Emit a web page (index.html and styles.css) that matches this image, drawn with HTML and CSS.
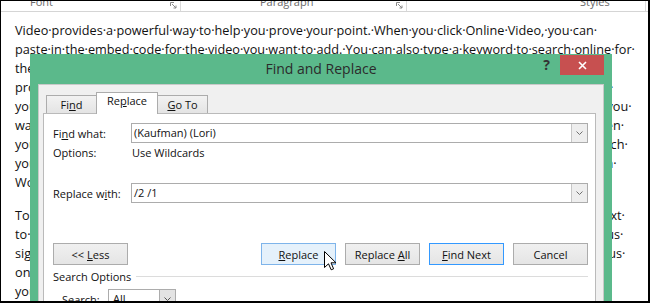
FILE: index.html
```html
<!DOCTYPE html>
<html lang="en">
<head>
  <meta charset="UTF-8">
  <title>Find and Replace</title>
  <link rel="stylesheet" href="styles.css">
</head>
<body>

  <div class="screen">
    <div class="ribbon">
      <div class="group group-font">
        <span class="group-label">Font</span>
        <svg class="launcher" width="7" height="7" viewBox="0 0 7 7"><path d="M0.5 4V0.5H4M2 2L6 6M6 3.5V6H3.5" fill="none" stroke="#8a8a8a" stroke-width="1"/></svg>
      </div>
      <div class="group group-para">
        <span class="group-label">Paragraph</span>
        <svg class="launcher" width="7" height="7" viewBox="0 0 7 7"><path d="M0.5 4V0.5H4M2 2L6 6M6 3.5V6H3.5" fill="none" stroke="#8a8a8a" stroke-width="1"/></svg>
      </div>
      <div class="group group-styles">
        <span class="group-label">Styles</span>
      </div>
    </div>

    <div class="doc">
      <p class="para">
        <span class="line">Video·provides·a·powerful·way·to·help·you·prove·your·point.·When·you·click·Online·Video,·you·can·</span>
        <span class="line">paste·in·the·embed·code·for·the·video·you·want·to·add.·You·can·also·type·a·keyword·to·search·online·for·</span>
        <span class="line">the·video·that·best·fits·your·document.·To·make·your·document·look·professionally·produced,·Word·</span>
        <span class="line">provides·header,·footer,·cover·page,·and·text·box·designs·that·complement·each·other.·For·example,·</span>
        <span class="line">you·can·add·a·matching·cover·page,·header,·and·sidebar.·Click·Insert·and·then·choose·the·elements·you·</span>
        <span class="line">want·from·the·different·galleries.·Themes·and·styles·also·help·keep·your·document·coordinated.·When·</span>
        <span class="line">you·click·Design·and·choose·a·new·Theme,·the·pictures,·charts,·and·SmartArt·graphics·change·to·match·</span>
        <span class="line">your·new·theme.·When·you·apply·styles,·your·headings·change·to·match·the·new·theme.·Save·time·in·</span>
        <span class="line">Word·with·new·buttons·that·show·up·where·you·need·them.¶</span>
      </p>
      <p class="para">
        <span class="line">To·change·the·way·a·picture·fits·in·your·document,·click·it·and·a·button·for·layout·options·appears·next·</span>
        <span class="line">to·it.·When·you·work·on·a·table,·click·where·you·want·to·add·a·row·or·a·column,·and·then·click·the·plus·</span>
        <span class="line">sign.·Reading·is·easier,·too,·in·the·new·Reading·view.·You·can·collapse·parts·of·the·document·and·focus·</span>
        <span class="line">on·the·text·you·want.·If·you·need·to·stop·reading·before·you·reach·the·end,·Word·remembers·where·</span>
        <span class="line">you·left·off·-·even·on·another·device.¶</span>
      </p>
    </div>

    <div class="dialog">
      <div class="titlebar">
        <span class="title">Find and Replace</span>
        <div class="controls">
          <span class="help">?</span>
          <span class="close">
            <svg width="9" height="9" viewBox="0 0 9 9"><path d="M1 1L8 8M8 1L1 8" stroke="#fff" stroke-width="1.6"/></svg>
          </span>
        </div>
      </div>

      <div class="client">
        <div class="tabs">
          <span class="tab">Fi<u>n</u>d</span>
          <span class="tab active">Re<u>p</u>lace</span>
          <span class="tab"><u>G</u>o To</span>
        </div>

        <div class="panel">
          <div class="field-row first">
            <span class="label">Fi<u>n</u>d what:</span>
            <div class="combo">
              <span class="combo-text">(Kaufman) (Lori)</span>
              <span class="combo-arrow"><svg width="7" height="4" viewBox="0 0 7 4"><path d="M0.5 0.5L3.5 3.5L6.5 0.5" fill="none" stroke="#707070"/></svg></span>
            </div>
          </div>

          <div class="field-row options">
            <span class="label">Options:</span>
            <span class="value">Use Wildcards</span>
          </div>

          <div class="field-row replace">
            <span class="label">Replace w<u>i</u>th:</span>
            <div class="combo">
              <span class="combo-text">/2 /1</span>
              <span class="combo-arrow"><svg width="7" height="4" viewBox="0 0 7 4"><path d="M0.5 0.5L3.5 3.5L6.5 0.5" fill="none" stroke="#707070"/></svg></span>
            </div>
          </div>

          <div class="button-row">
            <button class="btn">&lt;&lt; <u>L</u>ess</button>
            <div class="button-group">
              <button class="btn hover"><u>R</u>eplace</button>
              <button class="btn">Replace <u>A</u>ll</button>
              <button class="btn default"><u>F</u>ind Next</button>
              <button class="btn">Cancel</button>
            </div>
          </div>

          <div class="section-title">
            <span>Search Options</span>
            <span class="section-rule"></span>
          </div>

          <div class="search-row">
            <span class="search-label">Se<u>a</u>rch:</span>
            <div class="select">
              <span class="combo-text">All</span>
              <span class="select-arrow"><svg width="7" height="4" viewBox="0 0 7 4"><path d="M0.5 0.5L3.5 3.5L6.5 0.5" fill="none" stroke="#555"/></svg></span>
            </div>
          </div>
        </div>
      </div>
    </div>

    <svg class="cursor" width="13" height="20" viewBox="0 0 13 20">
      <path d="M0.5 0.5V16.5L4.5 12.8L7.2 18.8L9.6 17.8L7 11.8H12Z" fill="#fff" stroke="#000" stroke-width="1" stroke-linejoin="round"/>
    </svg>
  </div>

</body>
</html>
```

FILE: styles.css
```css
* {
  box-sizing: border-box;
}

body {
  margin: 0;
  background: #fff;
}

.screen {
  position: relative;
  width: 650px;
  height: 303px;
  overflow: hidden;
  background: #fff;
  border: solid #000;
  border-width: 1px 2px 2px 1px;
  font-family: "Open Sans", "Liberation Sans", sans-serif;
}

/* ribbon strip, cut off at the top */
.ribbon {
  display: flex;
  height: 11px;
  overflow: hidden;
  border-bottom: 1px solid #d5d5d5;
  font-size: 11px;
  color: #6a6a6a;
}

.group {
  display: flex;
  align-items: flex-start;
  border-right: 1px solid #dadada;
}

.group-font {
  width: 180px;
  padding-left: 29px;
}

.group-para {
  width: 226px;
  padding-left: 79px;
}

.group-styles {
  width: 239px;
  padding-left: 173px;
}

.group-label {
  line-height: 11px;
  margin-top: -5px;
}

.launcher {
  margin-left: auto;
  margin-right: 3px;
  margin-top: 1px;
}

/* document text */
.doc {
  padding: 9px 0 0 14px;
  font-size: 12.7px;
  line-height: 19px;
  color: #111;
}

.para {
  margin: 0 0 14px;
}

.line {
  display: block;
  white-space: nowrap;
}

/* dialog */
.dialog {
  position: absolute;
  left: 29px;
  top: 53px;
  width: 582px;
  height: 260px;
  padding: 0 8px;
  background: #5bb98b;
  display: flex;
  flex-direction: column;
}

.titlebar {
  display: grid;
  grid-template-columns: 1fr auto 1fr;
  height: 30px;
  flex: none;
}

.title {
  grid-column: 2;
  font-size: 14px;
  line-height: 30px;
  color: #2b2b2b;
}

.controls {
  justify-self: end;
  display: flex;
  align-items: flex-start;
  gap: 10px;
  margin-top: 1px;
}

.help {
  font-size: 14px;
  font-weight: 700;
  line-height: 20px;
  color: #333;
}

.close {
  width: 44px;
  height: 20px;
  background: #c75050;
  display: flex;
  align-items: center;
  justify-content: center;
}

.client {
  flex: 1;
  display: flex;
  flex-direction: column;
  padding: 7px 7px 0 4px;
  background: #f0f0f0;
  border: 1px solid #c9c9c9;
  border-bottom: none;
  font-size: 11px;
  color: #111;
}

.tabs {
  display: flex;
  align-items: flex-end;
  height: 21px;
  padding-left: 3px;
  flex: none;
}

.tab {
  width: 51px;
  height: 18px;
  margin-right: -1px;
  padding-top: 1px;
  border: 1px solid #acacac;
  border-bottom: none;
  background: linear-gradient(#f2f2f2, #e4e4e4);
  line-height: 16px;
  text-align: center;
}

.tab.active {
  position: relative;
  z-index: 1;
  width: 62px;
  height: 22px;
  margin-bottom: -1px;
  padding-top: 0;
  background: #fff;
}

.panel {
  flex: 1;
  padding: 0 7px 0 9px;
  background: #fff;
  border: 1px solid #bababa;
}

.field-row {
  display: grid;
  grid-template-columns: 78px 1fr;
  align-items: center;
}

.field-row.first {
  margin-top: 9px;
}

.field-row.options {
  height: 16px;
  margin-top: 1px;
}

.field-row.replace {
  margin-top: 23px;
}

.value {
  padding-left: 1px;
}

.combo {
  display: flex;
  height: 20px;
  border: 1px solid #acacac;
  background: #fff;
}

.combo-text {
  flex: 1;
  padding-left: 2px;
  line-height: 18px;
}

.combo-arrow {
  width: 16px;
  display: flex;
  align-items: center;
  justify-content: center;
  background: #eeeeee;
  border-left: 1px solid #c6c6c6;
}

.button-row {
  display: flex;
  justify-content: space-between;
  margin-top: 40px;
}

.button-group {
  display: flex;
  gap: 9px;
}

.btn {
  width: 75px;
  height: 22px;
  padding: 0;
  border: 1px solid #acacac;
  background: linear-gradient(#f0f0f0, #e5e5e5);
  font-family: inherit;
  font-size: 11px;
  color: #111;
}

.btn.hover {
  background: #e5f1fb;
  border-color: #7eb4ea;
}

.btn.default {
  border-color: #3399ff;
}

.section-title {
  display: flex;
  align-items: center;
  gap: 5px;
  height: 16px;
  margin-top: 3px;
}

.section-rule {
  flex: 1;
  border-top: 1px solid #dcdcdc;
}

.search-row {
  display: flex;
  align-items: center;
  margin-top: 5px;
  padding-left: 9px;
}

.search-label {
  width: 46px;
}

.select {
  display: flex;
  width: 68px;
  height: 20px;
  border: 1px solid #acacac;
  background: #fff;
}

.select .combo-text {
  padding-left: 4px;
}

.select-arrow {
  width: 16px;
  display: flex;
  align-items: center;
  justify-content: center;
  background: #e3e3e3;
  border-left: 1px solid #acacac;
}

.cursor {
  position: absolute;
  left: 323px;
  top: 250px;
}
```
